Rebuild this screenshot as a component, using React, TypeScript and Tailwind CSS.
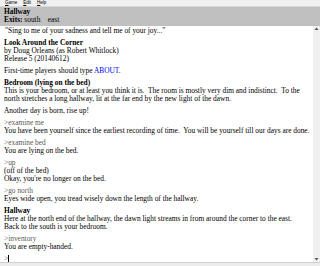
const serif = { fontFamily: '"Liberation Serif", "DejaVu Serif", serif' };

const Cmd = ({ children }: { children: string }) => (
  <div className="text-[#5a5a5a]">&gt;{children}</div>
);

export default function App() {
  return (
    <div className="w-[320px] h-[266px] flex flex-col bg-white overflow-hidden text-black" style={serif}>
      <div className="h-[7px] flex items-center gap-[6px] px-[5px] bg-[#f0f0f0] border-b border-[#d8d8d8] text-[4.5px] leading-none" style={{ fontFamily: '"Liberation Sans", sans-serif' }}>
        <span><u>G</u>ame</span>
        <span><u>E</u>dit</span>
        <span><u>H</u>elp</span>
      </div>
      <div className="h-[19px] bg-[#c0c0c0] px-[4px] pt-[1px] text-[7.4px] leading-[8px]">
        <div className="font-bold">Hallway</div>
        <div className="whitespace-pre"><b>Exits:</b> south    east</div>
      </div>
      <div className="flex flex-1 min-h-0">
        <div className="flex-1 px-[4px] pt-[1px] text-[7.4px] leading-[8px] flex flex-col gap-[4px]">
          <div className="pl-[1px]">"Sing to me of your sadness and tell me of your joy..."</div>
          <div>
            <div className="font-bold">Look Around the Corner</div>
            <div>by Doug Orleans (as Robert Whitlock)</div>
            <div>Release 5 (20140612)</div>
          </div>
          <div>First-time players should type <span className="text-[#0000ee]">ABOUT</span>.</div>
          <div>
            <div className="font-bold">Bedroom (lying on the bed)</div>
            <div className="whitespace-pre">This is your bedroom, or at least you think it is.  The room is mostly very dim and indistinct.  To the</div>
            <div>north stretches a long hallway, lit at the far end by the new light of the dawn.</div>
          </div>
          <div>Another day is born, rise up!</div>
          <div>
            <Cmd>examine me</Cmd>
            <div className="whitespace-pre">You have been yourself since the earliest recording of time.  You will be yourself till our days are done.</div>
          </div>
          <div>
            <Cmd>examine bed</Cmd>
            <div>You are lying on the bed.</div>
          </div>
          <div>
            <Cmd>up</Cmd>
            <div>(off of the bed)</div>
            <div>Okay, you're no longer on the bed.</div>
          </div>
          <div>
            <Cmd>go north</Cmd>
            <div>Eyes wide open, you tread wisely down the length of the hallway.</div>
          </div>
          <div>
            <div className="font-bold">Hallway</div>
            <div>Here at the north end of the hallway, the dawn light streams in from around the corner to the east.</div>
            <div>Back to the south is your bedroom.</div>
          </div>
          <div>
            <Cmd>inventory</Cmd>
            <div>You are empty-handed.</div>
          </div>
          <div className="flex items-center"><span className="text-[#5a5a5a]">&gt;</span><span className="w-[1px] h-[8px] bg-black" /></div>
        </div>
        <div className="w-[7px] bg-[#f0f0f0] flex flex-col justify-between items-center py-[1px]">
          <svg width="5" height="4" viewBox="0 0 5 4"><path d="M2.5 0.5 L4.5 3 L0.5 3 Z" fill="#555" /></svg>
          <svg width="5" height="4" viewBox="0 0 5 4"><path d="M0.5 1 L4.5 1 L2.5 3.5 Z" fill="#555" /></svg>
        </div>
      </div>
      <div className="h-[4px] bg-[#ececec] border-t border-[#cfcfcf]" />
    </div>
  );
}
